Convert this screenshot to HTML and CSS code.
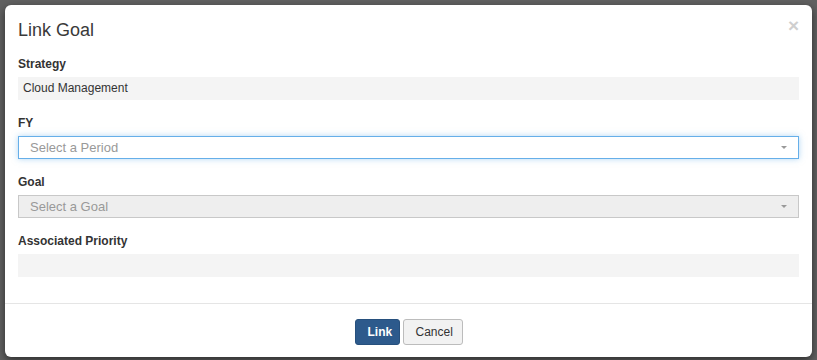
FILE: index.html
```html
<!DOCTYPE html>
<html>
<head>
<meta charset="utf-8">
<link rel="stylesheet" href="styles.css">
</head>
<body>
<div class="modal">
  <div class="modal-header">
    <h4 class="modal-title">Link Goal</h4>
    <button class="close" type="button">×</button>
  </div>
  <div class="modal-body">
    <div class="group">
      <label class="lbl">Strategy</label>
      <div class="static">Cloud Management</div>
    </div>
    <div class="group">
      <label class="lbl">FY</label>
      <div class="select focus"><span class="ph">Select a Period</span><span class="arrow"></span></div>
    </div>
    <div class="group">
      <label class="lbl">Goal</label>
      <div class="select disabled"><span class="ph">Select a Goal</span><span class="arrow"></span></div>
    </div>
    <div class="group">
      <label class="lbl">Associated Priority</label>
      <div class="static"></div>
    </div>
  </div>
  <div class="modal-footer">
    <button class="btn btn-primary" type="button">Link</button>
    <button class="btn btn-default" type="button">Cancel</button>
  </div>
</div>
</body>
</html>
```

FILE: styles.css
```css
html, body {
  margin: 0;
  padding: 0;
}
body {
  background: #616161;
  font-family: "Liberation Sans", Arial, sans-serif;
  color: #333;
  padding: 5px 5px 0 5px;
  height: 360px;
  box-sizing: border-box;
  overflow: hidden;
}
.modal {
  position: relative;
  width: 807px;
  background: #fff;
  border-radius: 6px;
  box-shadow: 0 3px 9px rgba(0, 0, 0, 0.55);
}
.modal-header {
  padding: 15px 13px 16px 13px;
  display: flex;
  align-items: center;
  justify-content: space-between;
}
.modal-title {
  margin: 0;
  font-size: 18px;
  font-weight: normal;
  line-height: 20px;
  color: #3a3a3a;
}
.close {
  border: 0;
  background: none;
  padding: 0;
  margin: -8px 0 0 0;
  font-family: "Liberation Sans", Arial, sans-serif;
  font-size: 19px;
  font-weight: bold;
  line-height: 20px;
  color: #cfcfcf;
  cursor: pointer;
}
.modal-body {
  padding: 0 13px 11px 13px;
}
.group {
  margin-bottom: 15px;
}
.lbl {
  display: block;
  font-size: 12px;
  font-weight: bold;
  line-height: 16px;
  margin-bottom: 5px;
  color: #333;
}
.static {
  height: 23px;
  background: #f4f4f4;
  font-size: 12px;
  line-height: 23px;
  padding: 0 5px;
  color: #333;
  box-sizing: border-box;
}
.select {
  height: 23px;
  box-sizing: border-box;
  border: 1px solid #ccc;
  display: flex;
  align-items: center;
  justify-content: space-between;
  padding: 0 11px 0 11px;
  font-size: 13px;
  color: #999;
}
.select.focus {
  border-color: #66afe9;
  box-shadow: 0 0 6px rgba(102, 175, 233, 0.5);
}
.select.disabled {
  background: #eee;
  border-color: #c8c8c8;
}
.arrow {
  width: 0;
  height: 0;
  border-left: 3px solid transparent;
  border-right: 3px solid transparent;
  border-top: 3px solid #999;
}
.modal-footer {
  border-top: 1px solid #e5e5e5;
  padding: 15px 0 12px 0;
  display: flex;
  justify-content: center;
  gap: 3px;
}
.btn {
  height: 26px;
  font-family: "Liberation Sans", Arial, sans-serif;
  font-size: 12px;
  border-radius: 3px;
  border: 1px solid transparent;
  padding: 0 12px;
  cursor: pointer;
}
.btn-primary {
  width: 45px;
  background: #2d5a8c;
  border-color: #27507d;
  color: #fff;
  font-weight: bold;
}
.btn-default {
  width: 60px;
  background: #f2f2f2;
  border-color: #bcbcbc;
  color: #333;
}
```
